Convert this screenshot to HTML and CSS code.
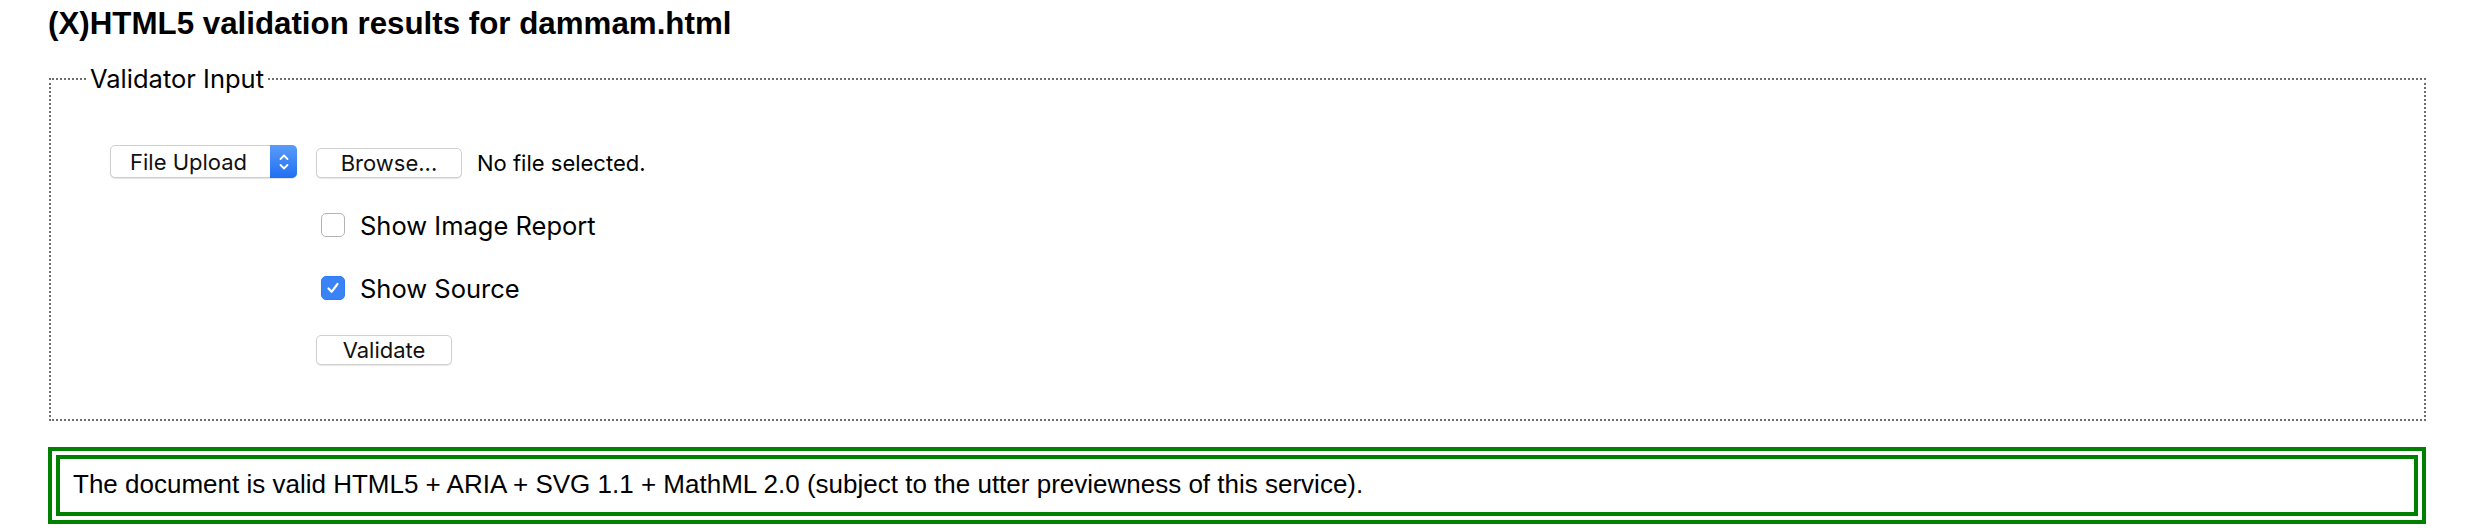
FILE: index.html
```html
<!DOCTYPE html>
<html lang="en">
<head>
  <meta charset="UTF-8" />
  <title>Validation results</title>
  <link rel="stylesheet" href="styles.css">
</head>
<body>
  <div class="page">
    <h2 class="title">(X)HTML5 validation results for dammam.html</h2>

    <form class="input-form">
      <fieldset class="validator">
        <legend>Validator Input</legend>

        <div class="row source-row">
          <span class="select-wrap">
            <select class="source-select">
              <option>File Upload</option>
            </select>
            <span class="stepper">
              <svg width="12" height="20" viewBox="0 0 12 20">
                <path d="M2.5 7 L6 3.5 L9.5 7" fill="none" stroke="#fff" stroke-width="1.8" stroke-linecap="round" stroke-linejoin="round"/>
                <path d="M2.5 13 L6 16.5 L9.5 13" fill="none" stroke="#fff" stroke-width="1.8" stroke-linecap="round" stroke-linejoin="round"/>
              </svg>
            </span>
          </span>
          <button type="button" class="btn browse">Browse...</button>
          <span class="file-name">No file selected.</span>
        </div>

        <label class="row option">
          <span class="check"></span>
          Show Image Report
        </label>

        <label class="row option">
          <span class="check checked">
            <svg width="16" height="16" viewBox="0 0 16 16">
              <path d="M3.5 8.5 L6.6 11.8 L12.5 4" fill="none" stroke="#fff" stroke-width="2.2" stroke-linecap="round" stroke-linejoin="round"/>
            </svg>
          </span>
          Show Source
        </label>

        <div class="row submit-row">
          <button type="button" class="btn validate">Validate</button>
        </div>
      </fieldset>
    </form>

    <p class="success">The document is valid HTML5 + ARIA + SVG 1.1 + MathML 2.0 (subject to the utter previewness of this service).</p>
  </div>
</body>
</html>
```

FILE: styles.css
```css
* {
  box-sizing: border-box;
}

body {
  margin: 0;
  background: #fff;
  color: #000;
  font-family: "Liberation Sans", Arial, sans-serif;
}

.page {
  padding: 8px 44px 0 48px;
}

.title {
  margin: 0;
  font-size: 31.3px;
  line-height: 31px;
  font-weight: bold;
}

.input-form {
  margin: 24px 0 0 1px;
}

.validator {
  margin: 0;
  border: 2px dotted #6e6e6e;
  padding: 50px 0 54px 0;
  display: flex;
  flex-direction: column;
  gap: 31px;
  font-family: Inter, "Noto Sans", sans-serif;
}

.validator legend {
  margin-left: 36px;
  padding: 0 3px;
  font-size: 25.5px;
  line-height: 32px;
}

.row {
  display: flex;
  align-items: center;
  margin-left: 59px;
}

.source-row {
  height: 33px;
  align-items: flex-end;
}

.select-wrap {
  position: relative;
  display: inline-block;
  width: 187px;
  height: 33px;
}

.source-select {
  appearance: none;
  -webkit-appearance: none;
  width: 100%;
  height: 100%;
  margin: 0;
  padding: 0 0 0 19px;
  border: 1px solid #cfcfcf;
  border-radius: 5px;
  background: #fff;
  box-shadow: 0 1px 1px rgba(0, 0, 0, 0.12);
  font-family: Inter, "Noto Sans", sans-serif;
  font-size: 22px;
  color: #111;
}

.stepper {
  position: absolute;
  top: 0;
  right: 0;
  width: 27px;
  height: 33px;
  border-radius: 0 5px 5px 0;
  background: linear-gradient(to bottom, #5a9cf8, #1f6ff3);
  display: flex;
  align-items: center;
  justify-content: center;
}

.btn {
  height: 30px;
  margin: 0;
  padding: 0;
  border: 1px solid #d0d0d0;
  border-radius: 5px;
  background: #fff;
  box-shadow: 0 1px 1px rgba(0, 0, 0, 0.1);
  font-family: Inter, "Noto Sans", sans-serif;
  font-size: 22px;
  color: #111;
}

.browse {
  width: 146px;
  margin-left: 19px;
}

.file-name {
  margin-left: 15px;
  font-size: 22px;
  line-height: 30px;
}

.option {
  height: 32px;
  margin-left: 270px;
  gap: 15px;
  font-size: 25.5px;
}

.check {
  width: 24px;
  height: 24px;
  border: 1px solid #b4b4b4;
  border-radius: 5px;
  background: #fff;
  display: flex;
  align-items: center;
  justify-content: center;
}

.check.checked {
  border-color: #2f7cf6;
  background: #3a83f7;
}

.submit-row {
  height: 30px;
  margin-left: 265px;
}

.validate {
  width: 136px;
  height: 30px;
}

.success {
  margin: 26px 0 0;
  border: 12px double #008000;
  padding: 11px 13px 13px;
  font-size: 26px;
  line-height: 29px;
}
```
